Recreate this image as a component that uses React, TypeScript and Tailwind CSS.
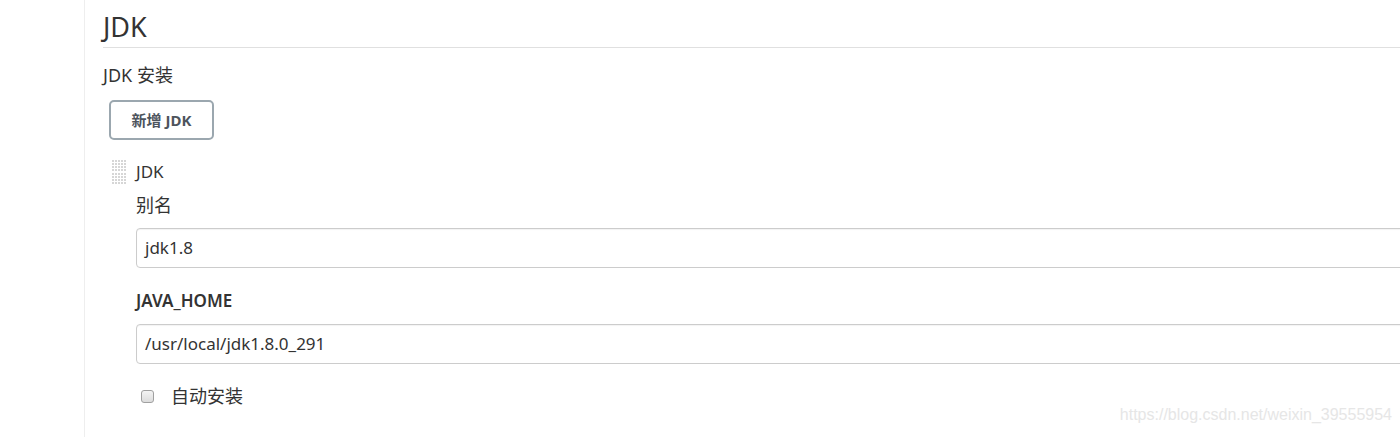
export default function App() {
  const font = { fontFamily: '"Segoe UI", "Noto Sans", "Noto Sans CJK SC", sans-serif' };
  return (
    <div className="flex h-[437px] w-[1400px] overflow-hidden bg-white text-[#333]" style={font}>
      {/* side panel */}
      <div className="w-[85px] shrink-0 border-r border-[#eeeeee]" />

      <div className="relative flex-1 overflow-hidden pl-[18px]">
        <div className="pt-[11px]">
          <h2 className="border-b border-[#e0e0e0] pb-[4px] text-[27px] leading-[32px] font-normal">JDK</h2>
        </div>

        <div className="mt-[16px] text-[18px] leading-[22px]">JDK 安装</div>

        <button className="mt-[14px] ml-[6px] h-[40px] w-[105px] rounded-[5px] border-2 border-[#9ba7af] text-[15px] font-bold text-[#4d545d]">
          新增 JDK
        </button>

        <div className="mt-[19px] flex items-start">
          {/* drag handle */}
          <div className="mt-[1px] ml-[9px] grid h-[24px] w-[14px] grid-cols-5 gap-[1px]">
            {Array.from({ length: 40 }).map((_, i) => (
              <span key={i} className="h-[2px] w-[2px] bg-[#d6d6d6]" />
            ))}
          </div>
          <div className="ml-[10px] text-[17px] leading-[26px]">JDK</div>
        </div>

        <div className="pl-[33px]">
          <div className="mt-[8px] text-[18px] leading-[24px]">别名</div>
          <div className="mt-[11px] flex h-[40px] w-[1400px] items-center rounded-[4px] border border-[#cccccc] pl-[8px] text-[17px] shadow-[inset_0_1px_1px_rgba(0,0,0,0.05)]">
            jdk1.8
          </div>

          <div className="mt-[21px] text-[17px] leading-[24px] font-semibold">JAVA_HOME</div>
          <div className="mt-[11px] flex h-[40px] w-[1400px] items-center rounded-[4px] border border-[#cccccc] pl-[8px] text-[17px] shadow-[inset_0_1px_1px_rgba(0,0,0,0.05)]">
            /usr/local/jdk1.8.0_291
          </div>

          <div className="mt-[20px] flex items-center">
            <span className="ml-[5px] h-[13px] w-[13px] rounded-[3px] border border-[#a0a0a0] bg-gradient-to-b from-[#f4f4f4] to-[#dcdcdc]" />
            <span className="ml-[17px] text-[18px] leading-[24px]">自动安装</span>
          </div>
        </div>

        <div
          className="absolute right-[8px] bottom-[10px] text-[16px] text-[#e6e6e6]"
          style={{ fontFamily: '"Liberation Sans", Arial, sans-serif' }}
        >
          https://blog.csdn.net/weixin_39555954
        </div>
      </div>
    </div>
  );
}
